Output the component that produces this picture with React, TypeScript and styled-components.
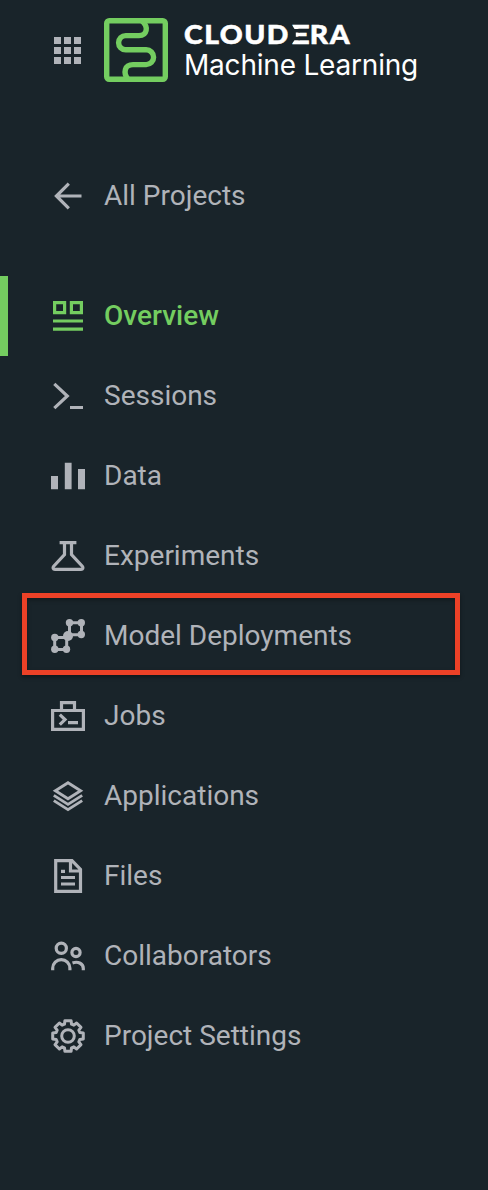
import React from 'react';
import styled, { createGlobalStyle, css } from 'styled-components';

const GREEN = '#74cd60';
const GREY = '#b0b3b9';
const BACKGROUND = '#19242a';

const GlobalStyle = createGlobalStyle`
  *, *::before, *::after { box-sizing: border-box; }
  body { margin: 0; background: ${BACKGROUND}; }
`;

const Sidebar = styled.aside`
  width: 100%;
  height: 1190px;
  background: ${BACKGROUND};
  font-family: Roboto, 'Liberation Sans', sans-serif;
  overflow: hidden;
`;

const Brand = styled.header`
  display: flex;
  align-items: center;
  height: 100px;
  padding-left: 54px;
`;

const AppSwitcher = styled.button`
  display: grid;
  grid-template-columns: repeat(3, 7px);
  grid-auto-rows: 7px;
  gap: 3px;
  padding: 0;
  border: 0;
  background: none;
`;

const Dot = styled.i`
  background: ${GREY};
`;

const LogoMark = styled.svg`
  width: 64px;
  height: 64px;
  margin-left: 23px;
`;

const Wordmark = styled.div`
  display: flex;
  flex-direction: column;
  margin: -1px 0 0 16px;
  color: #fff;
  white-space: nowrap;
`;

const Company = styled.span`
  height: 31px;
  padding-top: 2px;
  font: 900 27px/30px Lato, sans-serif;
  letter-spacing: 1.4px;
  -webkit-text-stroke: 0.5px #fff;
  transform: scaleX(1.05);
  transform-origin: left;
`;

/* The wordmark's E keeps its three bars and loses the stem between them. */
const StemlessE = styled.span`
  display: inline-block;
  margin-right: 3.5px;
  letter-spacing: 0;
  transform: scaleX(1.22);
  transform-origin: left;
  clip-path: polygon(
    1px 5px, 100% 5px, 100% 100%, 1px 100%, 1px 25.5px, 3.5px 21.3px,
    7.6px 21.3px, 7.6px 17.7px, 4.5px 17.7px, 4.5px 13.6px,
    7.6px 13.6px, 7.6px 10px, 3.5px 10px
  );
`;

const Product = styled.span`
  height: 34px;
  font: 400 28px/34px Inter, sans-serif;
  letter-spacing: -0.2px;
`;

const Nav = styled.nav`
  display: flex;
  flex-direction: column;
`;

const BackItem = styled.a`
  display: flex;
  align-items: center;
  height: 80px;
  margin: 56px 0 40px;
  padding-left: 50px;
  color: ${GREY};
`;

const NavItem = styled.a<{ $active?: boolean; $marked?: boolean }>`
  position: relative;
  display: flex;
  align-items: center;
  height: 80px;
  padding-left: 50px;
  color: ${GREY};
  ${({ $active }) => $active && css`
    padding-left: 42px;
    border-left: 8px solid ${GREEN};
    color: ${GREEN};
    font-weight: 500;
  `}
  ${({ $marked }) => $marked && css`
    &::after {
      content: '';
      position: absolute;
      left: 22px;
      top: -3px;
      width: 438px;
      height: 82px;
      border: 5px solid #ec4127;
      box-shadow: 0 2px 4px rgba(0, 0, 0, 0.4), inset 0 2px 4px rgba(0, 0, 0, 0.3);
    }
  `}
`;

const Icon = styled.svg`
  flex: none;
  width: 36px;
  height: 36px;
  fill: none;
  stroke: currentColor;
  stroke-width: 3.2;
`;

const Label = styled.span`
  margin-left: 18px;
  font-size: 28px;
  line-height: 32px;
  white-space: nowrap;
`;

const gearPath = (() => {
  const pts: string[] = [];
  for (let i = 0; i < 8; i++) {
    const base = (i * Math.PI) / 4 - Math.PI / 2;
    [[-0.29, 12.3], [-0.2, 15.6], [0.2, 15.6], [0.29, 12.3]].forEach(([a, r]) => {
      pts.push(`${(18 + r * Math.cos(base + a)).toFixed(2)} ${(18 + r * Math.sin(base + a)).toFixed(2)}`);
    });
  }
  return `M${pts.join('L')}Z`;
})();

const icons: Record<string, React.ReactNode> = {
  back: <path d="M31.5 18H6M18.8 5.6L6.4 18l12.4 12.4" />,
  overview: (
    <>
      <path d="M4.6 4.6h10v10h-10zM21.4 4.6h10v10h-10z" />
      <path d="M3 23h30M3 31.2h30" />
    </>
  ),
  sessions: <path d="M4.3 5.8L17.3 18 4.3 30.2M20 29.5h13" />,
  data: <path fill="currentColor" stroke="none" d="M1 18h7v13.3H1zM14.8 4.7h6.8v26.6h-6.8zM28 11h7v20.3h-7z" />,
  experiments: <path d="M9.6 4.6h16.8M14.5 4.5v12.2L3.7 28.2c-1.2 1.5-.6 3.1 1.2 3.1h26.2c1.8 0 2.4-1.6 1.2-3.1L21.5 16.7V4.5" />,
  models: (
    <>
      <path strokeWidth="3" d="M19.5 4.7h12v12h-12zM4.7 19.5h12v12h-12z" />
      <g fill="currentColor" stroke="none">
        <circle cx="18" cy="18" r="5" />
        <circle cx="19.5" cy="4.8" r="3.7" />
        <circle cx="31.3" cy="4.8" r="3.7" />
        <circle cx="31.3" cy="16.5" r="3.7" />
        <circle cx="4.8" cy="19.5" r="3.7" />
        <circle cx="4.8" cy="31.3" r="3.7" />
        <circle cx="16.5" cy="31.3" r="3.7" />
      </g>
    </>
  ),
  jobs: <path d="M2.6 12.5h30.8v18.9H2.6zM11.5 12V4.6h13V12M9.8 16.6l5.2 5-5.2 5M18 24.7h10" />,
  applications: (
    <>
      <path strokeWidth="2.9" d="M18 4.8L30.6 12.800 18 20.800 5.400 12.800z" />
      <path strokeWidth="2.9" d="M3.800 17.400L18 26.400l14.200-9M3.800 22.600L18 31.600l14.200-9" />
    </>
  ),
  files: <path d="M5.7 2.7H22l8.5 8.8v21.8H5.7zM20.5 3v10h10M11 13.3h4M11 19.5h14M11 26h14" />,
  collaborators: (
    <>
      <circle cx="11.3" cy="10.3" r="5.1" />
      <circle cx="26" cy="14.5" r="4.1" />
      <path d="M2.7 32.3v-2a8.6 8.6 0 0 1 17.2 0v2M22.5 24.9c6-2 10.8 1.1 10.8 5.6v1.8" />
    </>
  ),
  settings: (
    <>
      <path strokeWidth="3" strokeLinejoin="round" d={gearPath} />
      <circle cx="18" cy="18" r="6.3" strokeWidth="3" />
    </>
  ),
};

const items = [
  { icon: 'overview', label: 'Overview', active: true },
  { icon: 'sessions', label: 'Sessions' },
  { icon: 'data', label: 'Data' },
  { icon: 'experiments', label: 'Experiments' },
  { icon: 'models', label: 'Model Deployments', marked: true },
  { icon: 'jobs', label: 'Jobs' },
  { icon: 'applications', label: 'Applications' },
  { icon: 'files', label: 'Files' },
  { icon: 'collaborators', label: 'Collaborators' },
  { icon: 'settings', label: 'Project Settings' },
];

export default function App() {
  return (
    <Sidebar>
      <GlobalStyle />
      <Brand>
        <AppSwitcher aria-label="Apps">
          {Array.from({ length: 9 }, (_, i) => <Dot key={i} />)}
        </AppSwitcher>
        <LogoMark viewBox="0 0 64 64" fill="none" stroke={GREEN} strokeWidth="5.4">
          <rect x="2.7" y="2.7" width="58.6" height="58.6" rx="2.5" />
          <path d="M38 3c7 6 5 14.6-3 14.6H21.700a7.100 7.100 0 0 0 0 14.200H42.200a7.400 7.400 0 0 1 0 14.800H29c-8.500 0-10 8-5.200 14.500" />
        </LogoMark>
        <Wordmark>
          <Company>CLOUD<StemlessE>E</StemlessE>RA</Company>
          <Product>Machine Learning</Product>
        </Wordmark>
      </Brand>
      <Nav>
        <BackItem>
          <Icon viewBox="0 0 36 36">{icons.back}</Icon>
          <Label>All Projects</Label>
        </BackItem>
        {items.map(({ icon, label, active, marked }) => (
          <NavItem key={icon} $active={active} $marked={marked}>
            <Icon viewBox="0 0 36 36">{icons[icon]}</Icon>
            <Label>{label}</Label>
          </NavItem>
        ))}
      </Nav>
    </Sidebar>
  );
}
